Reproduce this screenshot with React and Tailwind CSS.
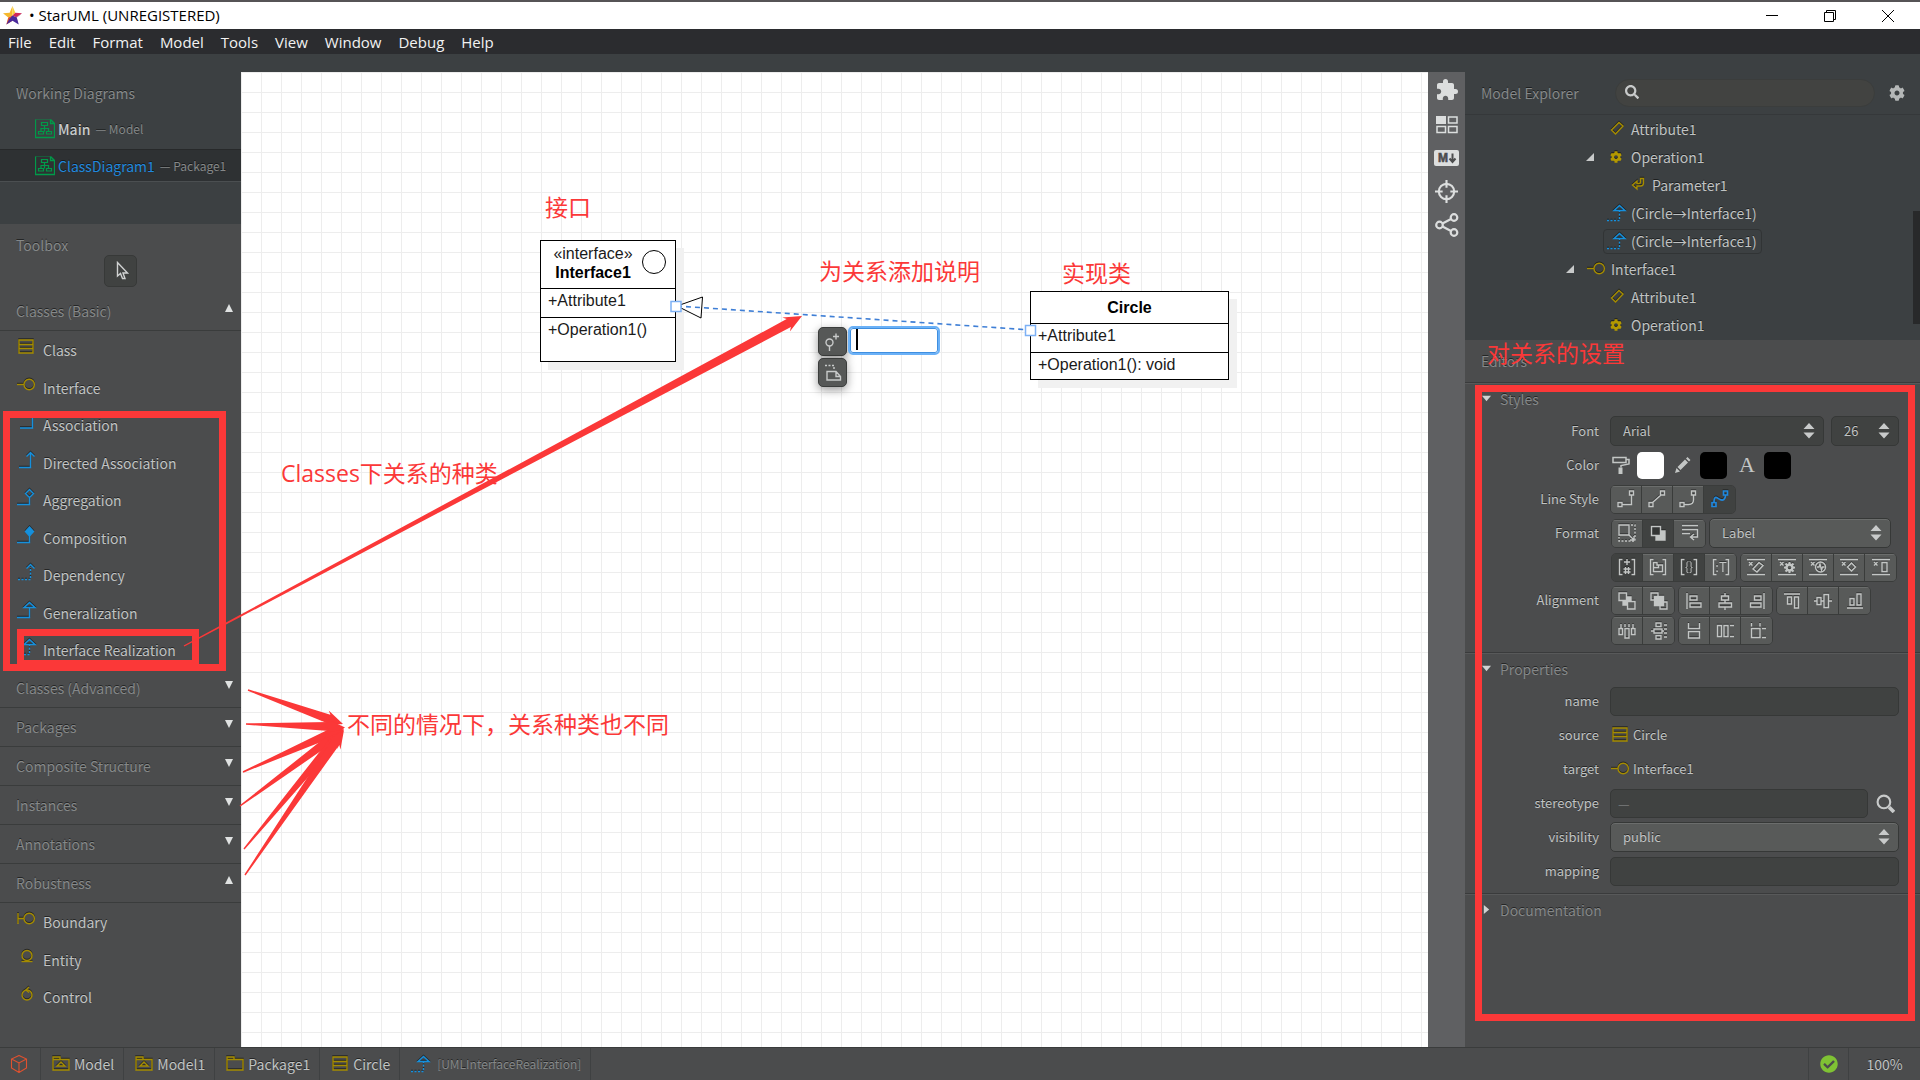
import React, { useState } from 'react';
import clsx from 'clsx';
import { FaCog, FaSearch, FaCheckCircle } from 'react-icons/fa';
import { MdExtension } from 'react-icons/md';

const UI_FONT = "font-['Noto_Sans_CJK_SC','Noto_Sans',sans-serif]";
const WIN_FONT = "font-['Open_Sans','Noto_Sans_CJK_SC',sans-serif]";
const EMBOSS = '[text-shadow:0_-1px_rgba(0,0,0,0.5)]';

const toolbox = [
  {
    title: 'Classes (Basic)',
    items: [
      { icon: 'class', name: 'Class' },
      { icon: 'interface', name: 'Interface' },
      { icon: 'association', name: 'Association' },
      { icon: 'directed', name: 'Directed Association' },
      { icon: 'aggregation', name: 'Aggregation' },
      { icon: 'composition', name: 'Composition' },
      { icon: 'dependency', name: 'Dependency' },
      { icon: 'generalization', name: 'Generalization' },
      { icon: 'realization', name: 'Interface Realization' },
    ],
  },
  { title: 'Classes (Advanced)', items: [] },
  { title: 'Packages', items: [] },
  { title: 'Composite Structure', items: [] },
  { title: 'Instances', items: [] },
  { title: 'Annotations', items: [] },
  {
    title: 'Robustness',
    items: [
      { icon: 'boundary', name: 'Boundary' },
      { icon: 'entity', name: 'Entity' },
      { icon: 'control', name: 'Control' },
    ],
  },
];

const tree = [
  { pad: 'pl-[121px]', icon: 'attribute', name: 'Attribute1' },
  { pad: 'pl-[121px]', icon: 'operation', name: 'Operation1', open: true },
  { pad: 'pl-[142px]', icon: 'parameter', name: 'Parameter1' },
  { pad: 'pl-[121px]', icon: 'realization', name: '(Circle→Interface1)' },
  { pad: 'pl-[121px]', icon: 'realization', name: '(Circle→Interface1)', selected: true },
  { pad: 'pl-[101px]', icon: 'interface', name: 'Interface1', open: true },
  { pad: 'pl-[121px]', icon: 'attribute', name: 'Attribute1' },
  { pad: 'pl-[121px]', icon: 'operation', name: 'Operation1' },
];

const crumbs = [
  { icon: 'model', name: 'Model' },
  { icon: 'model', name: 'Model1' },
  { icon: 'package', name: 'Package1' },
  { icon: 'class', name: 'Circle' },
];

const yellow = {
  class: <path d="M2 2h14v13H2zM2 6.500h14M2 10.500h14" />,
  interface: (
    <>
      <path d="M0 8.500h7" />
      <circle cx="12.200" cy="8.500" r="5.200" />
    </>
  ),
  boundary: (
    <>
      <path d="M1 3v11M1 8.500h6" />
      <circle cx="12.200" cy="8.500" r="5.200" />
    </>
  ),
  entity: (
    <>
      <circle cx="10" cy="7.500" r="5" />
      <path d="M4.500 13.500h11" />
    </>
  ),
  control: (
    <>
      <circle cx="10" cy="10" r="5" />
      <path d="M12 2l-3 3 3 2.500" />
    </>
  ),
  attribute: <path d="M4.500 10L12 2.500l4 3.500-7.500 8z" />,
  parameter: <path d="M12.500 2.500h3v4.500c0 2-1 3-3 3H9v3L4.500 9 9 5v2.500h2c1 0 1.500-.5 1.500-1.500z" />,
  package: <path d="M1 4.500V2h7v2.500M1 4.500h16V15H1z" />,
  model: <path d="M1 4.500V2h7v2.500M1 4.500h16V15H1zM9 7l4 4H5z" />,
};

const blue = {
  association: <path d="M3 15h12.500V3" />,
  directed: <path d="M2 16.500h11.500V1.500M9.500 5.500l4-4 4 4" />,
  aggregation: <path d="M0 16.500h12.500V9M12.500 1.500l4 4-4 4-4-4z" />,
  composition: (
    <>
      <path d="M0 16.500h12.500V9" />
      <path d="M12.500 1l4 4.500-4 4.500-4-4.500z" fill="#1590dd" />
    </>
  ),
  dependency: (
    <>
      <path d="M1 16.500h12.500V4" strokeDasharray="2 1.500" />
      <path d="M9.500 5.500l4-4 4 4" />
    </>
  ),
  generalization: <path d="M0 16.500h12.500V6M7 6.500h11l-5.500-5z" />,
  realization: (
    <>
      <path d="M0 16.500h12.500V7" strokeDasharray="2 1.500" />
      <path d="M7 6.500h11l-5.500-5z" />
    </>
  ),
};

function ModelIcon({ name }) {
  if (name === 'operation') {
    return <FaCog className="mx-[3px] size-3 shrink-0 text-[#b39800] drop-shadow-[0_-1px_0_rgba(0,0,0,0.5)]" />;
  }
  return (
    <svg
      viewBox="0 0 18 18"
      className="size-[18px] shrink-0 overflow-visible drop-shadow-[0_-1px_0_rgba(0,0,0,0.5)]"
      fill="none"
      stroke={blue[name] ? '#1590dd' : '#a58c00'}
      strokeWidth="1.4"
    >
      {blue[name] || yellow[name]}
    </svg>
  );
}

function DiagramIcon() {
  return (
    <svg viewBox="0 0 20 20" className="size-5 shrink-0" fill="none" stroke="#009a49">
      <path d="M.5.500v18h19V4.500M15.500.500v4h4L15.500.500" strokeWidth="1.300" />
      <path d="M.5.500h15" strokeWidth=".4" />
      <path d="M6.500 3.500h6v3h-6zM9.500 6.500v6M6 12v-2.500h7.500V12M3.500 12.500h5v2.500h-5zM11.500 12.500h5v2.500h-5z" strokeWidth="1.200" />
    </svg>
  );
}

// glyphs on the small style and alignment buttons
const brackets = <path d="M4.500 1.500H1.500v15h3M13.500 1.500h3v15h-3" />;
const bars = <path d="M0 1.500h18M0 16.500h18M2 4l3.500 3.500M5.500 4L2 7.500" />;

const glyphs = {
  rectilinear: <path d="M1 12.500h4v4H1zM5 14.500h9.500V5M12.500 1h4v4h-4z" />,
  oblique: <path d="M1 12.500h4v4H1zM4.500 12.500L13 5M12.500 1h4v4h-4z" />,
  rounded: <path d="M1 12.500h4v4H1zM5 14.500h4.500q5 0 5-5V5M12.500 1h4v4h-4z" />,
  curve: <path d="M1 12.500h4v4H1zM3 12.500C3 4.500 6 8 9 9.500s5.500 0 5.500-4.500M12.500 1h4v4h-4z" strokeWidth="1.700" />,
  resize: (
    <>
      <path d="M1 1h10v10H1z" />
      <path d="M13 1h4v16H1v-4" strokeDasharray="2 1.500" />
      <path d="M11 11l5 5M16 12v4h-4" />
    </>
  ),
  shadow: (
    <>
      <path d="M7 7h9v9H7z" fill="currentColor" />
      <path d="M2.500 2.500h9v9h-9z" fill="#333534" />
    </>
  ),
  wrap: <path d="M1 1.500h16M1 5.500h15.500v7.500H10M1 9.500h8M13 10l-3.500 3 3.500 3" />,
  visibility: (
    <>
      {brackets}
      <path d="M9 1v6M6 4h6M7.500 9v7M10.500 9v7M5.500 11h7M5.500 14h7" />
    </>
  ),
  namespace: (
    <>
      {brackets}
      <path d="M4.500 13.500v-9H8V7h5.500v6.500zM4.500 9.500h5V7" />
    </>
  ),
  property: (
    <>
      {brackets}
      <text x="9" y="13" textAnchor="middle" fontSize="12" fill="currentColor" stroke="none">{'{}'}</text>
    </>
  ),
  type: (
    <>
      {brackets}
      <text x="9" y="14" textAnchor="middle" fontSize="13" fill="currentColor" stroke="none">:T</text>
    </>
  ),
  noAttribute: <>{bars}<path d="M6 11l6-6.500 4 3-6 6.500z" /></>,
  noOperation: <>{bars}<circle cx="11.500" cy="9.500" r="3" strokeWidth="2.500" /><path d="M11.500 4v2M11.500 13v2M6 9.500h2M15 9.500h2M7.500 5.500l1.500 1.500M14 12l1.500 1.500M15.500 5.500L14 7M9 12l-1.500 1.500" strokeWidth="2" /></>,
  noReception: <>{bars}<circle cx="11.500" cy="9" r="5" /><path d="M8 9h2l1-3 1.500 6 1-3h2" /></>,
  noLiteral: <>{bars}<path d="M11.500 5l4 4-4 4-4-4z" /></>,
  noSlot: <>{bars}<path d="M10 4.500h5v9h-5z" /></>,
  toFront: (
    <>
      <path d="M5 5h8v8H5z" fill="currentColor" />
      <path d="M1 1h7.500v7.500H1zM9.500 9.500H17V17H9.500z" fill="#585a59" />
    </>
  ),
  toBack: (
    <>
      <path d="M1 1h7v7H1zM10 10h7v7h-7z" />
      <path d="M4.500 4.500h9v9h-9z" fill="currentColor" />
    </>
  ),
  left: <path d="M2 1v16M5 4h7v4H5zM5 11h11v4H5z" />,
  center: <path d="M9 1v3M9 8v3M9 15v3M5.500 4h7v4h-7zM3 11h12.500v4H3z" />,
  right: <path d="M16 1v16M6.500 4H13v4H6.500zM2.500 11H13v4H2.500z" />,
  top: <path d="M1 2h16M4.500 5h4v7h-4zM11.500 5h4v11h-4z" />,
  middle: <path d="M0 9h3M7 9h3M14.500 9H18M3 5.500h4v7H3zM10 2.500h4.500v13H10z" />,
  bottom: <path d="M1 16h16M4 6.500h4V13H4zM11 2h4v11h-4z" />,
  spaceH: <path d="M1 6.500h3.500v6H1zM7 6.500h4V16H7zM13.500 6.500H17v6h-3.500zM3 2v4M7 2v3M11 2v3M15 2v4" />,
  spaceV: <path d="M6 1h5v3.500H6zM4 7h8v4H4zM6 13.500h5V17H6zM1 9h3M12 9h2M14 3h3M14 7h3M14 11h3M14 15h3" />,
  sameW: <path d="M3.500 1v5.500h11V1M3.500 9.500h11V16h-11z" />,
  sameH: <path d="M1.500 3.500h4v11h-4zM8 3.500h4v11H8zM14 3.500h4M14 14.500h4" />,
  sameSize: <path d="M3.500 1v3.500M12 1v3.500M3.500 6.500H12v9H3.500zM14 6.500h4M14 15.500h4" />,
};

const groupsBelow = [
  ['visibility', 'namespace', 'property', 'type'],
  ['noAttribute', 'noOperation', 'noReception', 'noLiteral', 'noSlot'],
];
const alignment = [
  ['toFront', 'toBack'],
  ['left', 'center', 'right'],
  ['top', 'middle', 'bottom'],
];
const distribution = [
  ['spaceH', 'spaceV'],
  ['sameW', 'sameH', 'sameSize'],
];

function ButtonGroup({ names, active = [] }) {
  return (
    <div className="flex h-[29px] shrink-0 divide-x divide-[#3a3c3b] overflow-hidden rounded-[5px] border border-[#3a3c3b]">
      {names.map((name) => (
        <button
          key={name}
          type="button"
          aria-label={name}
          className={clsx(
            'flex w-[31px] items-center justify-center',
            active.includes(name) ? 'bg-[#404241]' : 'bg-[#585a59] shadow-[inset_0_1px_#6b6d6c]',
            name === 'curve' ? 'text-[#2088dd]' : 'text-[#c3c6c5]'
          )}
        >
          <svg viewBox="0 0 18 18" className="size-[18px] drop-shadow-[0_-1px_0_rgba(0,0,0,0.4)]" fill="none" stroke="currentColor" strokeWidth="1.400">
            {glyphs[name]}
          </svg>
        </button>
      ))}
    </div>
  );
}

function SelectBox({ id, label, value, width, dark }) {
  return (
    <div className={clsx('relative', width)}>
      <select
        id={id}
        aria-label={label}
        defaultValue={value}
        className={clsx(
          'h-[30px] w-full appearance-none rounded-[5px] border border-[#363837] pl-3 text-[13px] text-[#c0c3c3] outline-none',
          EMBOSS,
          dark ? 'bg-[#404241]' : 'bg-[#585a59] shadow-[inset_0_1px_#6b6d6c]'
        )}
      >
        <option>{value}</option>
      </select>
      <svg viewBox="0 0 12 16" className="pointer-events-none absolute top-[7px] right-[9px] h-4 w-3" fill="#c8caca">
        <path d="M6 0l5.500 6H.5zM6 15.500l5.500-6H.5z" />
      </svg>
    </div>
  );
}

function Field({ label, htmlFor, children, tall }) {
  return (
    <div className={clsx('flex gap-[11px] pr-[21px]', tall ? 'items-start pt-0.5 pb-[7px]' : 'h-[34px] items-center')}>
      <label htmlFor={htmlFor} className={clsx('w-[134px] shrink-0 text-right text-[13px] text-[#c0c3c3]', tall && 'leading-7', EMBOSS)}>
        {label}
      </label>
      {children}
    </div>
  );
}

function Section({ title, open, children }) {
  return (
    <section className="border-t border-[#3a3b3c] shadow-[inset_0_1px_#58595a]">
      <h3 className="flex h-[31px] items-center gap-[9px] pl-[17px] text-sm text-[#858889]">
        <svg viewBox="0 0 10 10" className="size-[9px]" fill="#d0d2d2">
          <path d={open ? 'M0 2h10L5 8z' : 'M2 0l6 5-6 5z'} />
        </svg>
        <span className={EMBOSS}>{title}</span>
      </h3>
      {children}
    </section>
  );
}

const inputStyle = 'h-[29px] w-full rounded-[5px] border border-[#363837] bg-[#404241] px-[7px] text-[13px] text-[#c0c3c3] outline-none placeholder:text-[#7a7d7d]';

function TitleBar() {
  return (
    <header className="flex h-[29px] items-center border-t-2 border-[#565456] bg-white pl-[3px]">
      <svg viewBox="0 0 20 20" className="size-[19px]">
        <path d="M10 0L7 7 0 7.500 5.500 12 10 10z" fill="#f5b82e" />
        <path d="M5.500 12L3.500 19.500 10 15.500V10z" fill="#e2552b" />
        <path d="M10 0l3 7-3 3z" fill="#f7d23c" />
        <path d="M13 7l7 .5-5.500 4.500L10 10z" fill="#d0275a" />
        <path d="M20 7.500L14.500 12l2 7.500L12 13z" fill="#a9a5ad" />
        <path d="M10 10l4.500 2 2 7.500-6.500-4-6.500 4L6.500 14z" fill="#4a2a9c" />
      </svg>
      <h1 className="ml-[7px] pb-px text-[15px] text-black">• StarUML (UNREGISTERED)</h1>
      <div className="ml-auto flex pr-[3px] text-black">
        <button type="button" aria-label="Minimize" className="flex w-[58px] justify-center">
          <svg viewBox="0 0 12 12" className="size-3" stroke="currentColor"><path d="M0 5.500h12" /></svg>
        </button>
        <button type="button" aria-label="Restore" className="flex w-[58px] justify-center">
          <svg viewBox="0 0 12 12" className="size-3" fill="none" stroke="currentColor"><path d="M.5 2.500h9v9h-9zM2.500 2.500v-2h9v9h-2" /></svg>
        </button>
        <button type="button" aria-label="Close" className="flex w-[58px] justify-center">
          <svg viewBox="0 0 12 12" className="size-3" stroke="currentColor"><path d="M0 0l12 12M12 0L0 12" /></svg>
        </button>
      </div>
    </header>
  );
}

function Sidebar() {
  const [open, setOpen] = useState(['Classes (Basic)', 'Robustness']);

  const toggle = (title) => {
    setOpen(open.includes(title) ? open.filter((t) => t !== title) : [...open, title]);
  };

  return (
    <aside className={clsx('flex w-[241px] shrink-0 flex-col bg-[#4b4c4d] text-sm', EMBOSS)}>
      <div className="bg-[#3c4042] pb-[42px]">
        <h2 className="flex h-[42px] items-center pl-4 text-[#858889]">Working Diagrams</h2>
        <ul>
          <li className="flex h-8 items-center gap-[3px] pb-0.5 pl-[35px]">
            <DiagramIcon />
            <span className="font-medium text-[#c8cbcb]">Main</span>
            <span className="pl-0.5 text-xs text-[#858889]">— Model</span>
          </li>
          <li className="mt-[3px] flex h-[33px] items-center gap-[3px] border-y border-t-[#27292a] border-b-[#4b4f51] bg-[#2e3133] pl-[35px]">
            <DiagramIcon />
            <span className="text-[#2088dd]">ClassDiagram1</span>
            <span className="pl-0.5 text-xs whitespace-nowrap text-[#858889]">— Package1</span>
          </li>
        </ul>
      </div>
      <h2 className="h-[31px] pt-[9px] pl-4 leading-6 text-[#858889]">Toolbox</h2>
      <button type="button" aria-label="Select" className="mx-auto mb-[5px] flex h-8 w-[33px] shrink-0 items-center justify-center rounded-[5px] border border-[#373938] bg-[#404241]">
        <svg viewBox="0 0 14 20" className="ml-1 h-5 w-3.5" fill="none" stroke="#d0d2d2" strokeWidth="1.400">
          <path d="M1.500 1.500v13.500l3-2.500 2 5h2.500l-2-5.500h4.500z" />
        </svg>
      </button>
      {toolbox.map((group) => (
        <div key={group.title}>
          <button
            type="button"
            aria-expanded={open.includes(group.title)}
            onClick={() => toggle(group.title)}
            className="flex h-[39px] w-full items-center justify-between border-b border-[#3a3c3c] pr-2 pl-4 text-[#858889]"
          >
            <span className={EMBOSS}>{group.title}</span>
            <svg viewBox="0 0 8 8" className="mb-1.5 size-2" fill="#e0e2e2">
              <path d={open.includes(group.title) ? 'M4 0l4 8H0z' : 'M0 0h8L4 8z'} />
            </svg>
          </button>
          {open.includes(group.title) && (
            <ul>
              {group.items.map((item) => (
                <li key={item.name} className="flex h-[38px] items-center gap-2 pl-[17px] text-[#c0c3c3] even:h-[37px]">
                  <span className="mb-1.5"><ModelIcon name={item.icon} /></span>
                  {item.name}
                </li>
              ))}
            </ul>
          )}
        </div>
      ))}
    </aside>
  );
}

function Note({ className, children }) {
  return <p className={clsx('pointer-events-none absolute text-[23px] leading-8 whitespace-nowrap text-[#fb3838]', WIN_FONT, className)}>{children}</p>;
}

function Canvas() {
  const box = "absolute border border-black bg-white font-['Liberation_Sans',Arial,sans-serif] text-base leading-[19px] text-[#1a1a1a] shadow-[8px_8px_0_#f1f1f1]";
  return (
    <main className="relative min-w-0 flex-1 overflow-hidden bg-white bg-[linear-gradient(#ededed_1px,transparent_1px),linear-gradient(90deg,#ededed_1px,transparent_1px)] bg-[size:20px_20px]">
      <div className={clsx(box, 'top-[168px] left-[299px] h-[122px] w-[136px]')}>
        <div className="relative h-12 border-b border-black pt-[3px] pr-[30px] text-center">
          «interface»
          <div className="font-bold text-black">Interface1</div>
          <span className="absolute top-[9px] right-[9px] size-6 rounded-full border border-black" />
        </div>
        <div className="h-[29px] border-b border-black px-[7px] pt-0.5">+Attribute1</div>
        <div className="px-[7px] pt-0.5">+Operation1()</div>
      </div>

      <div className={clsx(box, 'top-[219px] left-[789px] h-[89px] w-[199px]')}>
        <div className="h-8 border-b border-black pt-1.5 text-center font-bold text-black">Circle</div>
        <div className="h-[29px] border-b border-black px-[7px] pt-0.5">+Attribute1</div>
        <div className="px-[7px] pt-0.5">+Operation1(): void</div>
      </div>

      <svg className="absolute inset-0 size-full" fill="none">
        <path d="M436 234l25.500-9-1.500 21z" fill="#fff" stroke="#000" />
        <path d="M436 234L790 258" stroke="#3f7fd6" strokeWidth="1.600" strokeDasharray="5 4" />
        <path d="M430 229.500h10v10h-10zM784.500 253.500h10v10h-10z" fill="#fff" stroke="#7db1f5" strokeWidth="1.500" />
      </svg>

      <Note className="top-[119px] left-[304px]">接口</Note>
      <Note className="top-[183px] left-[578px]">为关系添加说明</Note>
      <Note className="top-[185px] left-[821px]">实现类</Note>
      <Note className="top-[385px] left-[40px]">Classes下关系的种类</Note>
      <Note className="top-[636px] left-[106px]">不同的情况下，关系种类也不同</Note>

      <div className="absolute top-[255px] left-[577px] flex items-start gap-[3px]">
        <div className="flex flex-col gap-0.5">
          <button type="button" aria-label="Add note" className="flex size-[29px] items-center justify-center rounded-[5px] border border-[#3b3d3c] bg-[#565857] shadow-[0_3px_10px_rgba(0,0,0,0.4)]">
            <svg viewBox="0 0 18 18" className="size-[18px]" fill="none" stroke="#c8caca" strokeWidth="1.400">
              <circle cx="5.500" cy="9.500" r="3.500" />
              <path d="M5.500 13v5M12 .5v6M9 3.500h6" />
            </svg>
          </button>
          <button type="button" aria-label="Add documentation" className="flex size-[29px] items-center justify-center rounded-[5px] border border-[#3b3d3c] bg-[#565857] shadow-[0_3px_10px_rgba(0,0,0,0.4)]">
            <svg viewBox="0 0 18 18" className="size-[18px]" fill="none" stroke="#c8caca" strokeWidth="1.400">
              <path d="M1 1.500h9V6" strokeDasharray="2 1.500" />
              <path d="M3 7.500h9l4.500 5V16H3zM12 7.500v5h4.500" />
            </svg>
          </button>
        </div>
        <div className="relative">
          <input aria-label="Relationship name" className="h-[25px] w-[88px] rounded-[3px] border border-[#3f8fe0] bg-white px-1 text-sm outline-2 outline-[#6bb1f7]" />
          <span className="absolute top-0.5 left-[6px] h-[21px] w-0.5 bg-black" />
        </div>
      </div>
    </main>
  );
}

function ToolStrip() {
  return (
    <nav className="flex w-[37px] shrink-0 flex-col items-center bg-[#5f6062] pt-[5px] text-[#dcdede]">
      <button type="button" aria-label="Extensions" className="flex h-[25px] items-center"><MdExtension className="size-6" /></button>
      <button type="button" aria-label="Diagram thumbnails" className="mt-3 flex h-[22px] items-center">
        <svg viewBox="0 0 22 18" className="h-[18px] w-[22px]" fill="none" stroke="currentColor" strokeWidth="1.500">
          <path d="M0 0h10v8H0z" fill="currentColor" stroke="none" />
          <path d="M12.500 1h8.500v6h-8.500zM1 10.500h8.500v6H1zM12.500 10.500h8.500v6h-8.500z" />
        </svg>
      </button>
      <button type="button" aria-label="Markdown" className="mt-[13px] flex h-[18px] items-center">
        <svg viewBox="0 0 25 16" className="h-4 w-[25px] overflow-visible font-['Liberation_Sans',Arial,sans-serif]">
          <rect width="25" height="16" rx="2" fill="currentColor" />
          <text x="9" y="12" textAnchor="middle" fontSize="12" fontWeight="700" fill="#4c4d4e" stroke="#4c4d4e" strokeWidth=".6">M</text>
          <path d="M18.500 3.500v8M15.500 8.500l3 3.500 3-3.500" stroke="#4c4d4e" strokeWidth="2" fill="none" />
        </svg>
      </button>
      <button type="button" aria-label="Navigator" className="mt-3 flex h-6 items-center">
        <svg viewBox="0 0 24 24" className="size-[23px]" fill="none" stroke="currentColor" strokeWidth="2.200">
          <circle cx="12" cy="12" r="8" />
          <path d="M12 0v8M12 16v8M0 12h8M16 12h8" />
        </svg>
      </button>
      <button type="button" aria-label="Share" className="mt-2.5 flex h-6 items-center">
        <svg viewBox="0 0 24 24" className="size-6" fill="none" stroke="currentColor" strokeWidth="2.200">
          <circle cx="4.500" cy="12" r="3.300" />
          <circle cx="19" cy="4.500" r="3.300" />
          <circle cx="19" cy="19.500" r="3.300" />
          <path d="M7.500 10.500l8.500-4.500M7.500 13.500l8.500 4.500" />
        </svg>
      </button>
    </nav>
  );
}

function Explorer() {
  return (
    <div className="relative bg-[#3c4042] pb-px">
      <div className="flex h-[42px] items-center pr-[15px] pl-4">
        <h2 className={clsx('w-[134px] text-sm text-[#858889]', EMBOSS)}>Model Explorer</h2>
        <div className="relative mr-3.5 flex-1">
          <FaSearch className="absolute top-1.5 left-2.5 size-3.5 text-[#c8caca]" />
          <input aria-label="Search" className="h-7 w-full rounded-full border border-[#3b3d3c] bg-[#424341] pl-8 text-[13px] text-[#c0c3c3] outline-none" />
        </div>
        <button type="button" aria-label="Explorer settings"><FaCog className="size-4 text-[#b4b7b7]" /></button>
      </div>
      <div className="h-px bg-[#35383a]" />
      <ul className={clsx('text-sm text-[#c0c3c3]', EMBOSS)}>
        {tree.map((node, i) => (
          <li key={i} className={clsx('flex h-7 items-center', node.pad)}>
            <svg viewBox="0 0 8 8" className={clsx('mr-[9px] size-2', !node.open && 'invisible')} fill="#c8caca">
              <path d="M8 0v8H0z" />
            </svg>
            <span className={clsx('flex h-[25px] items-center gap-1.5 rounded border pr-1 pl-[3px]', node.selected ? 'border-[#313435]' : 'border-transparent')}>
              <ModelIcon name={node.icon} />
              {node.name}
            </span>
          </li>
        ))}
      </ul>
      <span className="absolute right-0 bottom-4 h-[113px] w-[7px] bg-[#28292a]" />
    </div>
  );
}

function Editors() {
  return (
    <div className="flex-1">
      <h2 className={clsx('flex h-[42px] items-center pl-4 text-sm text-[#858889]', EMBOSS)}>Editors</h2>
      <Section title="Styles" open>
        <Field label="Font" htmlFor="font">
          <SelectBox id="font" value="Arial" width="flex-1" dark />
          <div className="-ml-1 w-[68px]"><SelectBox label="Font size" value="26" width="w-full" dark /></div>
        </Field>
        <Field label="Color">
          <div className="flex items-center text-[#c3c6c5]">
            <svg viewBox="0 0 18 18" className="mr-[7px] ml-0.5 size-[18px]" fill="none" stroke="currentColor" strokeWidth="1.500">
              <path d="M1 1.500h13v5H1zM14 3.500h3v4.500L9 9.500v2" />
              <path d="M6.500 11.500h4V18h-4z" fill="currentColor" stroke="none" />
            </svg>
            <button type="button" aria-label="Fill color" className="size-[27px] rounded-[5px] bg-white" />
            <svg viewBox="0 0 18 18" className="mx-[9px] size-[18px]" fill="currentColor">
              <path d="M2 17l1.500-5 3.500 3.500zM4.500 11L12 3.500 15 6.500 7.500 14zM13 2.500L14.500 1 17.500 4 16 5.500z" />
            </svg>
            <button type="button" aria-label="Line color" className="size-[27px] rounded-[5px] bg-black" />
            <span className="mx-3 w-[13px] text-center font-['Liberation_Serif',serif] text-[22px] leading-6">A</span>
            <button type="button" aria-label="Font color" className="size-[27px] rounded-[5px] bg-black" />
          </div>
        </Field>
        <Field label="Line Style">
          <ButtonGroup names={['rectilinear', 'oblique', 'rounded', 'curve']} active={['curve']} />
        </Field>
        <Field label="Format" htmlFor="stereotypeDisplay">
          <div className="flex flex-1 items-center gap-[3px] pr-2 pl-px">
            <ButtonGroup names={['resize', 'shadow', 'wrap']} active={['shadow']} />
            <SelectBox id="stereotypeDisplay" value="Label" width="flex-1" />
          </div>
        </Field>
        <Field label="">
          <div className="flex gap-[3px] pl-px">
            {groupsBelow.map((names) => (
              <ButtonGroup key={names[0]} names={names} active={['visibility', 'property']} />
            ))}
          </div>
        </Field>
        <Field label="Alignment" tall>
          <div className="flex flex-col gap-px pl-px">
            {[alignment, distribution].map((row, i) => (
              <div key={i} className="flex gap-[3px]">
                {row.map((names) => <ButtonGroup key={names[0]} names={names} />)}
              </div>
            ))}
          </div>
        </Field>
      </Section>
      <Section title="Properties" open>
        <Field label="name" htmlFor="name"><input id="name" className={inputStyle} /></Field>
        <Field label="source">
          <span className={clsx('flex items-center gap-1 pl-px text-[13px] text-[#c0c3c3]', EMBOSS)}><ModelIcon name="class" />Circle</span>
        </Field>
        <Field label="target">
          <span className={clsx('flex items-center gap-1 pl-px text-[13px] text-[#c0c3c3]', EMBOSS)}><ModelIcon name="interface" />Interface1</span>
        </Field>
        <Field label="stereotype" htmlFor="stereotype">
          <div className="flex flex-1 items-center gap-2">
            <input id="stereotype" placeholder="—" className={inputStyle} />
            <button type="button" aria-label="Find stereotype" className="pr-1">
              <svg viewBox="0 0 18 18" className="size-[19px]" fill="none" stroke="#c8caca" strokeWidth="2">
                <circle cx="7.500" cy="7.500" r="6" />
                <path d="M12.500 12.500l4.500 4.500" strokeWidth="3.500" />
              </svg>
            </button>
          </div>
        </Field>
        <Field label="visibility" htmlFor="visibility"><SelectBox id="visibility" value="public" width="flex-1" /></Field>
        <Field label="mapping" htmlFor="mapping"><input id="mapping" className={inputStyle} /></Field>
        <div className="h-[5px]" />
      </Section>
      <Section title="Documentation" />
    </div>
  );
}

function StatusBar() {
  return (
    <footer className={clsx('flex h-[33px] items-stretch border-t border-[#3a3c3c] bg-[#4b4c4d] text-sm text-[#c0c3c3]', EMBOSS)}>
      <div className="flex w-[41px] items-center border-r border-[#3f4142] pl-2.5">
        <svg viewBox="0 0 18 18" className="size-[18px]" fill="none" stroke="#e0512f" strokeWidth="1.100">
          <path d="M9 .5l7.500 3.500v9L9 17.500 1.500 13V4zM1.500 4L9 8l7.500-4M9 8v9.500" />
        </svg>
      </div>
      {crumbs.map((c) => (
        <a key={c.name} href="#" className="flex items-center gap-1 border-r border-[#3f4142] pr-[9px] pl-[11px]">
          <ModelIcon name={c.icon} />
          {c.name}
        </a>
      ))}
      <a href="#" className="flex items-center gap-2 border-r border-[#3f4142] pr-[9px] pl-[11px] text-xs text-[#858889]">
        <ModelIcon name="realization" />
        [UMLInterfaceRealization]
      </a>
      <div className="ml-auto flex w-[41px] items-center justify-center border-x border-[#3f4142]">
        <FaCheckCircle className="size-[18px] text-[#7fc234]" />
      </div>
      <div className="flex w-[71px] items-center justify-center">100%</div>
    </footer>
  );
}

const arrows = [
  [184, 646, 802, 316],
  [248, 690, 343, 724],
  [246, 724, 344, 727],
  [243, 772, 345, 727],
  [240, 806, 344, 729],
  [244, 849, 343, 730],
  [245, 875, 344, 730],
];

// tapered arrow, thin at the tail and wide at the head
function arrowPoints([x1, y1, x2, y2]) {
  const len = Math.hypot(x2 - x1, y2 - y1);
  const ux = (x2 - x1) / len;
  const uy = (y2 - y1) / len;
  const at = (along, side) => `${x1 + ux * along - uy * side},${y1 + uy * along + ux * side}`;
  return [
    at(0, -0.7),
    at(len - 15, -4.5),
    at(len - 18, -8),
    at(len, 0),
    at(len - 18, 8),
    at(len - 15, 4.5),
    at(0, 0.7),
  ].join(' ');
}

function Arrows() {
  return (
    <svg className="pointer-events-none absolute inset-0 size-full" fill="#fb3838">
      {arrows.map((a) => (
        <polygon key={a.join()} points={arrowPoints(a)} />
      ))}
    </svg>
  );
}

export default function App() {
  return (
    <div className={clsx('relative flex min-h-screen flex-col bg-[#4b4c4d]', UI_FONT)}>
      <div className={WIN_FONT}>
        <TitleBar />
        <nav className="flex h-[25px] items-center gap-[17px] bg-[#2b2c2f] pt-px pl-2 text-[15px] text-[#f2f2f2]">
          {['File', 'Edit', 'Format', 'Model', 'Tools', 'View', 'Window', 'Debug', 'Help'].map((m) => (
            <button key={m} type="button">{m}</button>
          ))}
        </nav>
      </div>
      <div className="h-[18px] bg-[#3c4042]" />
      <div className="flex flex-1">
        <Sidebar />
        <Canvas />
        <ToolStrip />
        <aside className="relative flex w-[455px] shrink-0 flex-col">
          <Explorer />
          <Editors />
          <Note className="top-[265px] left-[22px]">对关系的设置</Note>
          <div className="pointer-events-none absolute top-[313px] right-[5px] bottom-[26px] left-2.5 border-7 border-[#fb3838]" />
        </aside>
      </div>
      <StatusBar />
      <div className="pointer-events-none absolute top-[411px] left-[3px] h-[260px] w-[223px] border-7 border-[#fb3838]" />
      <div className="pointer-events-none absolute top-[629px] left-[17px] h-[38px] w-[182px] border-7 border-[#fb3838]" />
      <Arrows />
    </div>
  );
}
